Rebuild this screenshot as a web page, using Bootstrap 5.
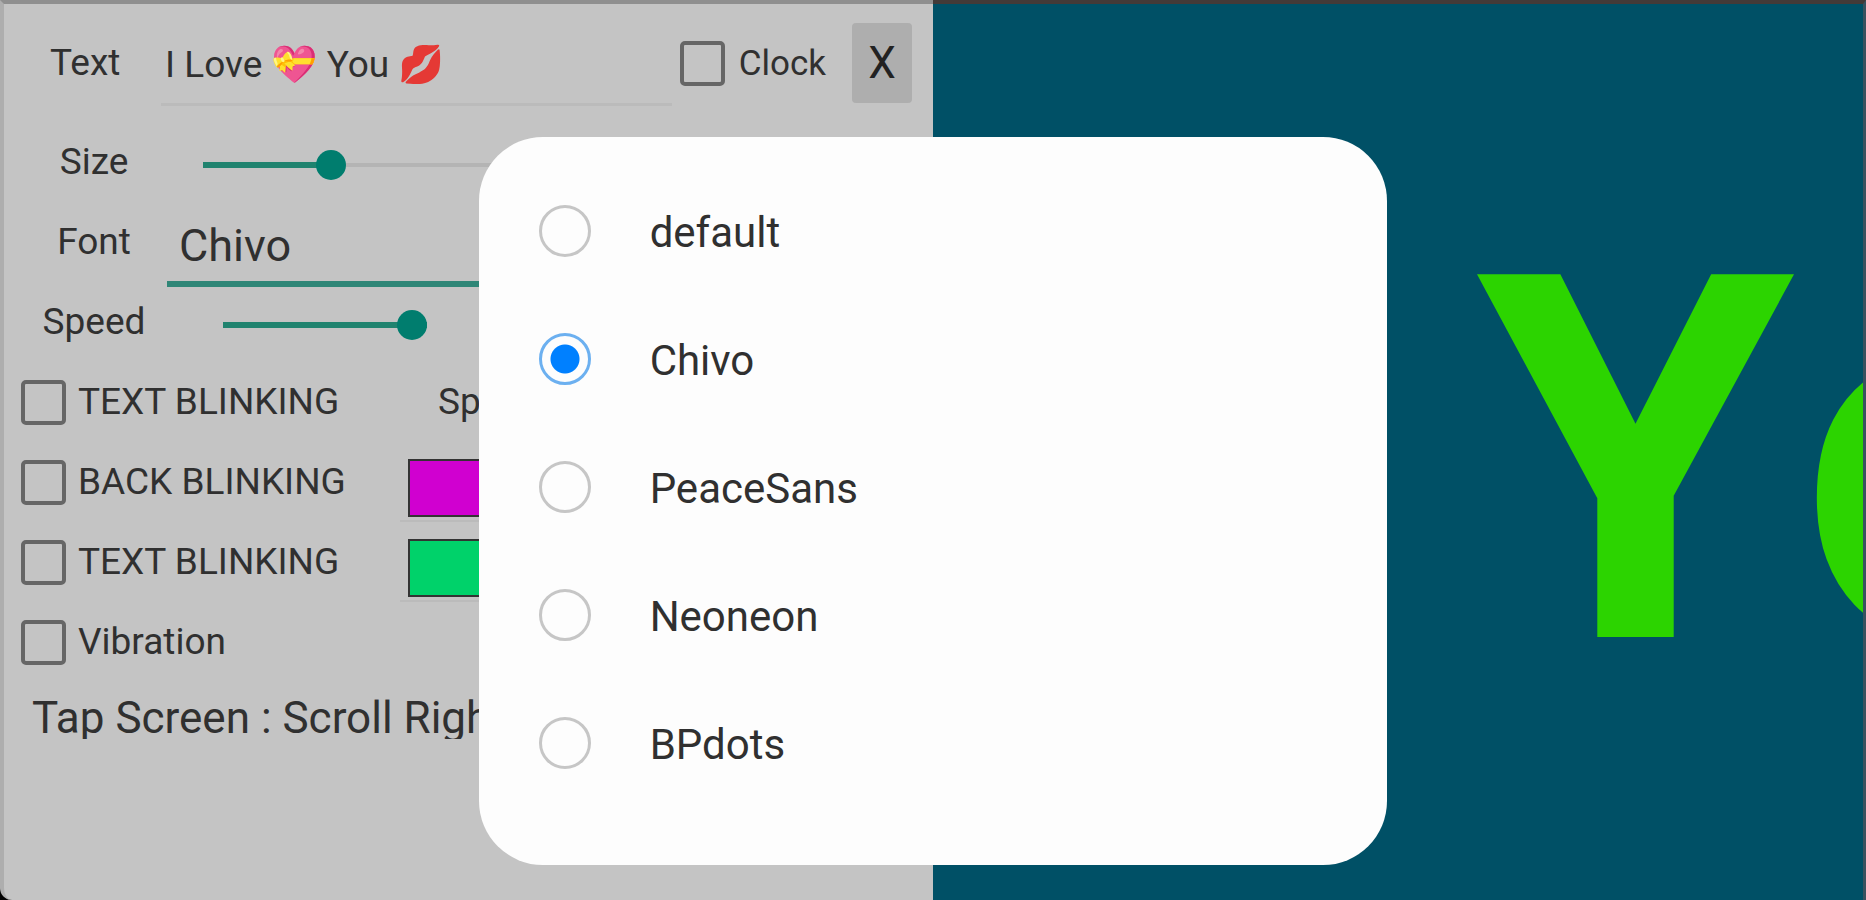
<!DOCTYPE html>
<html lang="en">
<head>
<meta charset="utf-8">
<meta name="viewport" content="width=device-width, initial-scale=1">
<title>LED Scroller</title>
<link href="https://cdn.jsdelivr.net/npm/bootstrap@5.3.0/dist/css/bootstrap.min.css" rel="stylesheet">
<style>
  body { font-family: Roboto, "Liberation Sans", sans-serif; background: #000; color: #303030; }
  .stage { min-height: 100vh; }
  .settings { width: 50%; background: #c4c4c4; border-top: 4px solid #8f8f8f; border-left: 4px solid #aeaeae; border-bottom-left-radius: 12px; font-size: 37px; line-height: 44px; }
  .preview { min-width: 0; background: #005066; border-top: 4px solid #433a38; border-right: 3px solid #38525f; }
  .preview-text { font: 700 508px/600px "Open Sans", "Noto Sans", sans-serif; color: #2cd400; font-kerning: none; padding: 136px 0 0 544px; }
  .row-top { height: 118px; padding-left: 46px; padding-right: 21px; }
  .row-item { height: 80px; }
  .row-pad { padding-left: 17px; }
  .text-label { width: 111px; }
  .clock-label { font-size: 35px; margin: 2px 26px 0 14px; }
  .field-name { width: 146px; text-align: center; }
  .message { border: 0; border-bottom: 3px solid #bbb; background: transparent; height: 86px; color: inherit; padding: 6px 4px 0; min-width: 0; }
  .font-pick { appearance: none; border: 0; border-bottom: 6px solid #2f8677; background: transparent; color: inherit; font-size: 45px; line-height: 52px; height: 90px; padding: 14px 12px 0; }
  .tick { appearance: none; flex: none; width: 45px; height: 45px; margin: 0; border: 4px solid #666; border-radius: 5px; background: transparent; }
  .tick-label { padding-left: 12px; }
  .blink-label { width: 334px; }
  .close-btn { width: 60px; height: 80px; border: 0; border-radius: 4px; background: #aeaeae; color: #222; font-size: 44px; line-height: 60px; padding: 0; }
  .slide { appearance: none; height: 30px; margin-top: 6px; background: linear-gradient(#20836f, #20836f) 0 50% / var(--fill) 6px no-repeat, linear-gradient(#b4b4b4, #b4b4b4) 0 50% / 100% 4px no-repeat; }
  .slide::-webkit-slider-thumb { appearance: none; width: 30px; height: 30px; border-radius: 50%; background: #007d6e; border: 0; }
  .size-slide { margin-left: 36px; }
  .speed-slide { margin-left: 56px; width: 204px; }
  .blink-speed-label { margin: 0 24px 0 38px; }
  .swatch { appearance: none; width: 100%; height: 58px; padding: 0; border: 2px solid #333; background: none; display: block; }
  .swatch::-webkit-color-swatch-wrapper { padding: 0; }
  .swatch::-webkit-color-swatch { border: 0; border-radius: 0; }
  .swatch-box { height: 80px; border-bottom: 2px solid #bbb; padding: 17px 8px 0; }
  .tip { font-size: 44px; line-height: 48px; height: 45px; margin: 12px 0 0 28px; overflow: hidden; white-space: nowrap; }
  .overlay { padding-top: 102px; pointer-events: none; }
  .font-dialog { pointer-events: auto; width: 48.7%; background: #fdfdfd; border-radius: 64px; padding: 30px 60px 58px; font-size: 42px; line-height: 52px; }
  .choice { height: 128px; gap: 59px; }
  .choice label { padding-top: 4px; }
  .dot { appearance: none; flex: none; margin: 0; width: 52px; height: 52px; border: 3px solid #c6c6c6; border-radius: 50%; }
  .dot:checked { border-color: #6cb0f0; background: radial-gradient(circle, #0080ff 14px, transparent 15px); }
</style>
</head>
<body>
<main class="stage d-flex position-relative overflow-hidden">
  <form class="settings flex-shrink-0 overflow-hidden">
    <div class="row-top d-flex align-items-center">
      <label for="message" class="text-label">Text</label>
      <input id="message" class="message flex-grow-1" type="text" value="I Love 💝 You 💋">
      <input id="clock" class="tick ms-2" type="checkbox">
      <label for="clock" class="clock-label">Clock</label>
      <button type="button" class="close-btn">X</button>
    </div>
    <div class="row-item d-flex align-items-center row-pad pe-4">
      <label for="size" class="field-name">Size</label>
      <input id="size" class="slide size-slide flex-grow-1" style="--fill:18%" type="range" max="1000" value="167">
    </div>
    <div class="row-item d-flex align-items-center row-pad pe-4">
      <label for="font" class="field-name">Font</label>
      <select id="font" class="font-pick flex-grow-1"><option>default</option><option selected>Chivo</option><option>PeaceSans</option><option>Neoneon</option><option>BPdots</option></select>
    </div>
    <div class="row-item d-flex align-items-center row-pad">
      <label for="speed" class="field-name">Speed</label>
      <input id="speed" class="slide speed-slide" style="--fill:100%" type="range" max="100" value="100">
    </div>
    <div class="row-item d-flex align-items-center row-pad pe-4">
      <input id="blink" class="tick" type="checkbox">
      <label for="blink" class="tick-label blink-label">TEXT BLINKING</label>
      <label for="blink-speed" class="blink-speed-label">Speed</label>
      <input id="blink-speed" class="slide flex-grow-1" style="--fill:50%" type="range">
    </div>
    <div class="row-item d-flex align-items-center row-pad pe-4">
      <input id="back" class="tick" type="checkbox">
      <label for="back" class="tick-label blink-label">BACK BLINKING</label>
      <div class="swatch-box flex-grow-1"><input class="swatch" type="color" value="#d000d0" aria-label="Back colour"></div>
    </div>
    <div class="row-item d-flex align-items-center row-pad pe-4">
      <input id="fore" class="tick" type="checkbox">
      <label for="fore" class="tick-label blink-label">TEXT BLINKING</label>
      <div class="swatch-box flex-grow-1"><input class="swatch" type="color" value="#00d26a" aria-label="Text colour"></div>
    </div>
    <div class="row-item d-flex align-items-center row-pad">
      <input id="vibrate" class="tick" type="checkbox">
      <label for="vibrate" class="tick-label">Vibration</label>
    </div>
    <p class="tip">Tap Screen : Scroll Right</p>
  </form>
  <section class="preview flex-grow-1 overflow-hidden">
    <div class="preview-text">You</div>
  </section>
  <div class="overlay position-absolute top-0 start-0 w-100 h-100 d-flex align-items-center justify-content-center">
    <div class="font-dialog" role="dialog" aria-label="Font">
      <div class="choice d-flex align-items-center"><input class="dot" type="radio" name="f" id="f1"><label for="f1">default</label></div>
      <div class="choice d-flex align-items-center"><input class="dot" type="radio" name="f" id="f2" checked><label for="f2">Chivo</label></div>
      <div class="choice d-flex align-items-center"><input class="dot" type="radio" name="f" id="f3"><label for="f3">PeaceSans</label></div>
      <div class="choice d-flex align-items-center"><input class="dot" type="radio" name="f" id="f4"><label for="f4">Neoneon</label></div>
      <div class="choice d-flex align-items-center"><input class="dot" type="radio" name="f" id="f5"><label for="f5">BPdots</label></div>
    </div>
  </div>
</main>
<script src="https://cdn.jsdelivr.net/npm/bootstrap@5.3.0/dist/js/bootstrap.bundle.min.js"></script>
</body>
</html>
